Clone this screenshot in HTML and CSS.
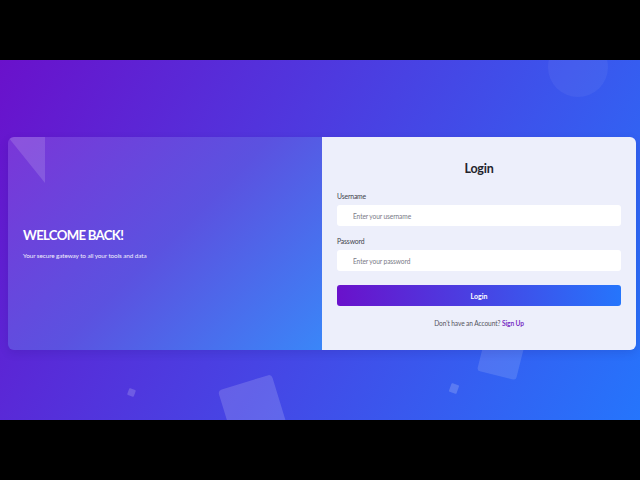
FILE: index.html
```html
<!DOCTYPE html>
<html lang="en">
<head>
<meta charset="utf-8">
<title>Login</title>
<link rel="stylesheet" href="styles.css">
</head>
<body>
<div class="screen">
  <div class="bar"></div>
  <main class="stage">
    <span class="deco circle"></span>
    <span class="deco square-big"></span>
    <span class="deco square-mid"></span>
    <span class="deco dot dot-left"></span>
    <span class="deco dot dot-right"></span>
    <div class="card">
      <section class="welcome">
        <span class="corner"></span>
        <h1 class="welcome-title">WELCOME BACK!</h1>
        <p class="welcome-text">Your secure gateway to all your tools and data</p>
      </section>
      <section class="login">
        <h2 class="login-title">Login</h2>
        <form class="form">
          <label class="label" for="username">Username</label>
          <input class="input" id="username" type="text" placeholder="Enter your username">
          <label class="label label-next" for="password">Password</label>
          <input class="input" id="password" type="password" placeholder="Enter your password">
          <button class="button" type="button">Login</button>
        </form>
        <p class="signup">Don't have an Account? <a class="signup-link" href="#">Sign Up</a></p>
      </section>
    </div>
  </main>
  <div class="bar"></div>
</div>
</body>
</html>
```

FILE: styles.css
```css
* { box-sizing: border-box; }
html, body { margin: 0; padding: 0; background: #000; }
body { font-family: Lato, "Noto Sans", sans-serif; }

.screen {
  width: 640px;
  height: 480px;
  display: flex;
  flex-direction: column;
}
.bar { height: 60px; background: #000; flex: none; }

.stage {
  position: relative;
  height: 360px;
  flex: none;
  overflow: hidden;
  background: linear-gradient(120deg, #6a11cb 0%, #2575fc 100%);
  padding: 77px 4px 0 8px;
  display: flex;
  align-items: flex-start;
}

.deco { position: absolute; display: block; }
.circle {
  width: 60px; height: 60px; border-radius: 50%;
  left: 548px; top: -23px;
  background: rgba(255, 255, 255, 0.05);
}
.square-big {
  width: 56px; height: 64px; border-radius: 4px;
  left: 226px; top: 321px;
  transform: rotate(-17deg);
  background: rgba(255, 255, 255, 0.16);
}
.square-mid {
  width: 40px; height: 46px; border-radius: 3px;
  left: 482px; top: 270px;
  transform: rotate(14deg);
  background: rgba(255, 255, 255, 0.13);
}
.dot {
  width: 7px; height: 7px; border-radius: 1px;
  background: rgba(255, 255, 255, 0.18);
  transform: rotate(20deg);
}
.dot-left { left: 128px; top: 329px; }
.dot-right { left: 450px; top: 324px; width: 8px; height: 9px; }

.card {
  position: relative;
  z-index: 1;
  width: 628px;
  height: 213px;
  display: flex;
  border-radius: 6px;
  box-shadow: 0 3px 10px rgba(20, 10, 80, 0.12);
}

.welcome {
  position: relative;
  width: 314px;
  flex: none;
  border-radius: 6px 0 0 6px;
  overflow: hidden;
  background: linear-gradient(135deg, #7a36d8 0%, #5b52e0 50%, #3a86f8 100%);
  padding: 0 15px;
  display: flex;
  flex-direction: column;
  justify-content: center;
  color: #fff;
}
.corner {
  position: absolute;
  left: 0; top: 0;
  width: 37px; height: 46px;
  background: rgba(255, 255, 255, 0.14);
  clip-path: polygon(0 0, 100% 0, 100% 100%);
}
.welcome-title {
  margin: 0;
  font-size: 13.2px;
  line-height: 16px;
  font-weight: 700;
  letter-spacing: -0.7px;
}
.welcome-text {
  margin: 8px 0 0;
  font-size: 6.4px;
  line-height: 9px;
  letter-spacing: -0.1px;
  color: #f0eefc;
}

.login {
  width: 314px;
  flex: none;
  border-radius: 0 6px 6px 0;
  background: #edeffb;
  padding: 0 15px;
  display: flex;
  flex-direction: column;
}
.login-title {
  margin: 23px 0 0;
  text-align: center;
  font-size: 12.5px;
  line-height: 18px;
  font-weight: 700;
  letter-spacing: -0.2px;
  color: #23232b;
}
.form { display: flex; flex-direction: column; margin-top: 13px; }
.label {
  font-size: 6.8px;
  line-height: 10px;
  letter-spacing: -0.15px;
  color: #3f3f4c;
}
.label-next { margin-top: 10px; }
.input {
  margin-top: 4px;
  height: 21px;
  border: none;
  border-radius: 3px;
  background: #fff;
  padding: 0 0 0 16px;
  font-family: inherit;
  font-size: 6.6px;
  letter-spacing: -0.1px;
  color: #333;
  outline: none;
}
.input::placeholder { color: #7a7a86; }
.button {
  margin-top: 14px;
  height: 21px;
  border: none;
  border-radius: 3px;
  background: linear-gradient(90deg, #6a11cb 0%, #2575fc 100%);
  color: #fff;
  font-family: inherit;
  font-size: 7px;
  font-weight: 700;
  padding: 0;
}
.signup {
  margin: 12px 0 0;
  text-align: center;
  font-size: 6.6px;
  line-height: 10px;
  letter-spacing: -0.1px;
  color: #555560;
}
.signup-link {
  color: #7a2fc4;
  font-weight: 700;
  text-decoration: none;
}
```
